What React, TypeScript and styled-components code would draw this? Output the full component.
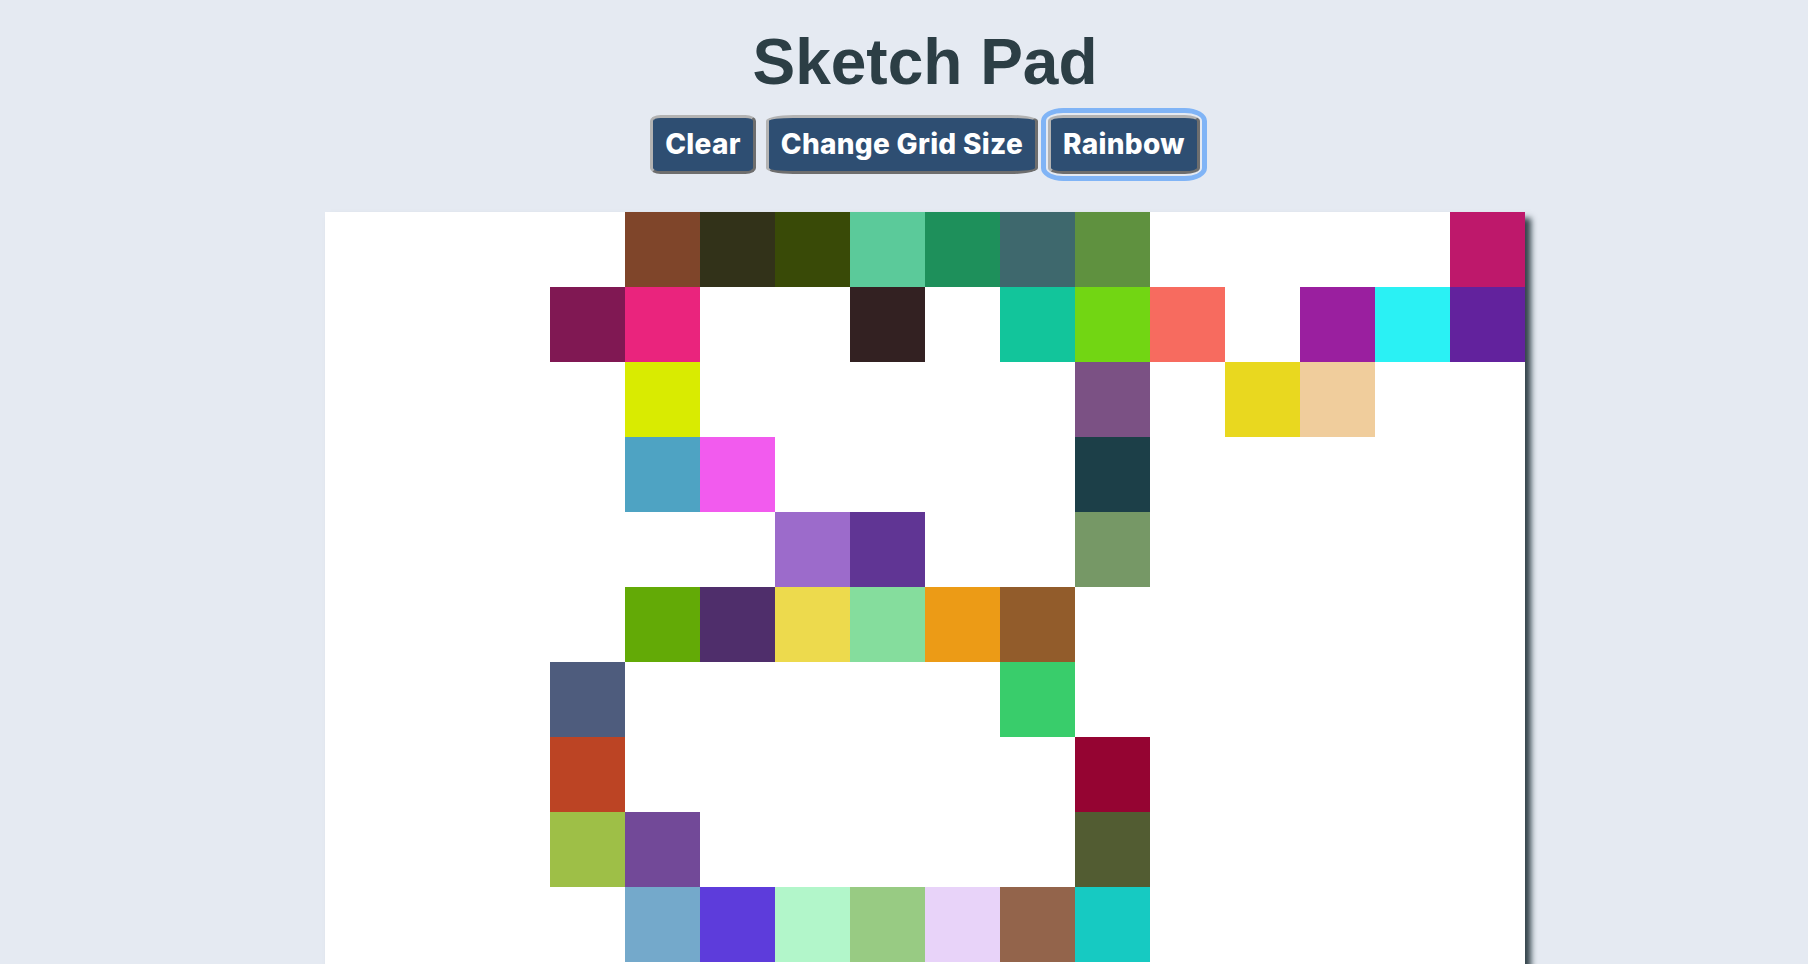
import React from "react";
import styled, { createGlobalStyle } from "styled-components";

const GlobalStyle = createGlobalStyle`
  html, body {
    margin: 0;
    padding: 0;
    background: #e5eaf2;
  }
  * { box-sizing: border-box; }
`;

const Page = styled.main`
  min-height: 100vh;
  display: flex;
  flex-direction: column;
  align-items: center;
  padding-left: 42px;
  background: #e5eaf2;
`;

const Title = styled.h1`
  margin: 30px 0 0;
  font-family: "Liberation Sans", Arial, sans-serif;
  font-weight: 700;
  font-size: 64px;
  line-height: 64px;
  color: #2c3e45;
`;

const Toolbar = styled.div`
  display: flex;
  align-items: center;
  gap: 10px;
  margin-top: 21px;
`;

const Button = styled.button<{ $focused?: boolean }>`
  font-family: Inter, "Noto Sans", sans-serif;
  font-weight: 800;
  font-size: 28px;
  line-height: 33px;
  letter-spacing: 0.3px;
  color: #ffffff;
  background: #2e4e72;
  padding: 10px 12px;
  border: 3px solid;
  border-color: #b3b3b3 #6e6e6e #6e6e6e #b3b3b3;
  border-radius: 10%;
  cursor: pointer;
  outline: ${(p) => (p.$focused ? "5px solid #80b4f6" : "none")};
  outline-offset: 2px;
`;

const Board = styled.div`
  margin-top: 38px;
  display: grid;
  grid-template-columns: repeat(16, 75px);
  grid-auto-rows: 75px;
  background: #ffffff;
  box-shadow: 6px 6px 6px #34444b;
`;

const Cell = styled.div<{ $color: string }>`
  background: ${(p) => p.$color || "#ffffff"};
`;

const painted: Record<string, string> = {
  "0,4": "#7f452a", "0,5": "#323219", "0,6": "#394a07", "0,7": "#5bca9a",
  "0,8": "#1e905b", "0,9": "#3e686d", "0,10": "#5f913f", "0,15": "#be186b",
  "1,3": "#801853", "1,4": "#ea247d", "1,7": "#332122", "1,9": "#12c59b",
  "1,10": "#72d613", "1,11": "#f76b5f", "1,13": "#9a1f9f", "1,14": "#2af1f4",
  "1,15": "#62229d",
  "2,4": "#d9eb01", "2,10": "#7b5184", "2,12": "#e9d81f", "2,13": "#f0cd9c",
  "3,4": "#4ea3c3", "3,5": "#f25bee", "3,10": "#1c3f48",
  "4,6": "#9c6bcb", "4,7": "#603594", "4,10": "#769866",
  "5,4": "#63aa06", "5,5": "#4f2e6b", "5,6": "#edda4d", "5,7": "#85dd9d",
  "5,8": "#ec9b16", "5,9": "#925c2b",
  "6,3": "#4e5c7d", "6,9": "#39cd6b",
  "7,3": "#bc4424", "7,10": "#950432",
  "8,3": "#9ebf47", "8,4": "#724998", "8,10": "#525c32",
  "9,4": "#74a9cb", "9,5": "#5d3cdb", "9,6": "#b2f6ca", "9,7": "#98cb83",
  "9,8": "#e8d3f9", "9,9": "#93644b", "9,10": "#16cac2",
};

const SIZE = 16;

export default function App() {
  const cells = [];
  for (let r = 0; r < SIZE; r++) {
    for (let c = 0; c < SIZE; c++) {
      cells.push(<Cell key={`${r}-${c}`} $color={painted[`${r},${c}`] || ""} />);
    }
  }
  return (
    <>
      <GlobalStyle />
      <Page>
        <Title>Sketch Pad</Title>
        <Toolbar>
          <Button>Clear</Button>
          <Button>Change Grid Size</Button>
          <Button $focused>Rainbow</Button>
        </Toolbar>
        <Board>{cells}</Board>
      </Page>
    </>
  );
}
